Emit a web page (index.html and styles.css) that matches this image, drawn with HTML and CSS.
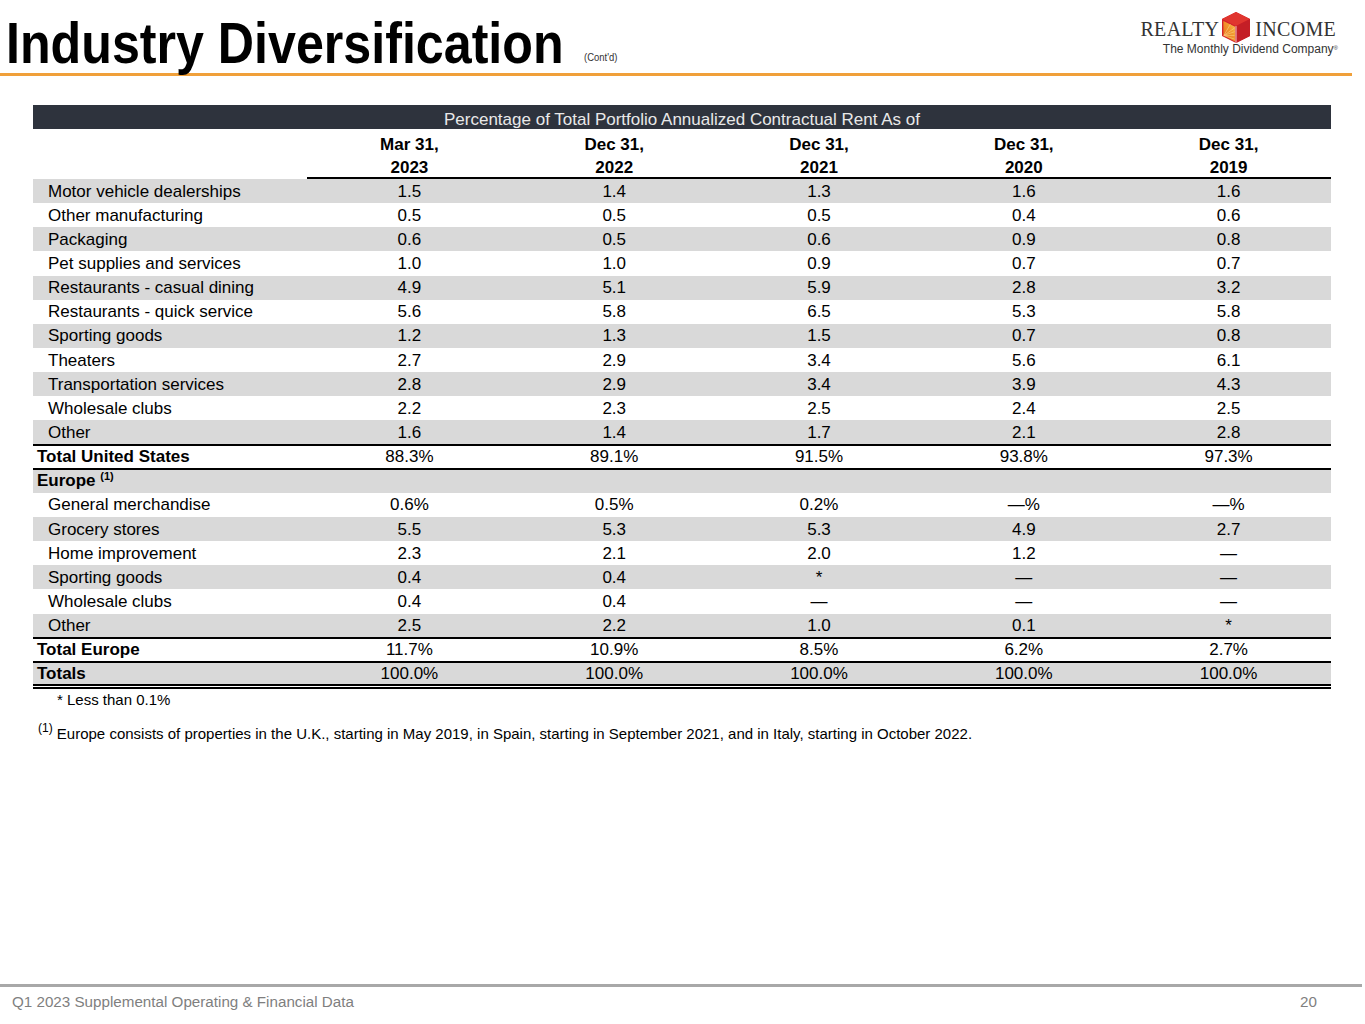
FILE: index.html
```html
<!DOCTYPE html>
<html lang="en">
<head>
<meta charset="utf-8">
<title>Industry Diversification (Cont'd)</title>
<link rel="stylesheet" href="styles.css">
</head>
<body>
<div class="page">
  <header class="top">
    <div class="title-wrap">
      <h1 class="title">Industry Diversification</h1>
      <span class="contd">(Cont'd)</span>
    </div>
    <div class="logo">
      <div class="logo-row">
        <span class="logo-word">REALTY</span>
        <svg class="logo-mark" viewBox="0 0 30 33" width="28" height="31" aria-hidden="true">
          <defs>
            <linearGradient id="face" x1="0" y1="1" x2="1" y2="0">
              <stop offset="0" stop-color="#e8631c"/>
              <stop offset="0.6" stop-color="#f29a2e"/>
              <stop offset="1" stop-color="#f7c35a"/>
            </linearGradient>
          </defs>
          <polygon points="15,0 30,7.5 30,25.5 15,33 0,25.5 0,7.5" fill="#d4232b"/>
          <polygon points="15,0 30,7.5 15,15 0,7.5" fill="#e0352f"/>
          <polygon points="15,15 30,7.5 30,25.5 15,33" fill="#c41e26"/>
          <polygon points="1.5,9.5 14,15.8 14,31.5 1.5,25" fill="url(#face)"/>
          <g stroke="#fbd98a" stroke-width="0.7" opacity="0.85">
            <line x1="2" y1="25" x2="13.5" y2="17"/>
            <line x1="2" y1="25" x2="13.5" y2="21"/>
            <line x1="2" y1="25" x2="13.5" y2="25"/>
            <line x1="2" y1="25" x2="13.5" y2="29"/>
            <line x1="2" y1="25" x2="9" y2="13"/>
          </g>
          <line x1="15" y1="15" x2="15" y2="33" stroke="#ffffff" stroke-width="0.8"/>
        </svg>
        <span class="logo-word">INCOME</span>
      </div>
      <div class="tagline">The Monthly Dividend Company<sup>®</sup></div>
    </div>
  </header>

  <main class="content">
    <div class="tbl">
      <div class="bar">Percentage of Total Portfolio Annualized Contractual Rent As of</div>
      <div class="hrow">
        <div class="hlabel"></div>
        <div class="hcell">Mar 31,<br>2023</div>
        <div class="hcell">Dec 31,<br>2022</div>
        <div class="hcell">Dec 31,<br>2021</div>
        <div class="hcell">Dec 31,<br>2020</div>
        <div class="hcell">Dec 31,<br>2019</div>
      </div>

      <div class="row shade"><div class="lbl sub">Motor vehicle dealerships</div><div>1.5</div><div>1.4</div><div>1.3</div><div>1.6</div><div>1.6</div></div>
      <div class="row"><div class="lbl sub">Other manufacturing</div><div>0.5</div><div>0.5</div><div>0.5</div><div>0.4</div><div>0.6</div></div>
      <div class="row shade"><div class="lbl sub">Packaging</div><div>0.6</div><div>0.5</div><div>0.6</div><div>0.9</div><div>0.8</div></div>
      <div class="row"><div class="lbl sub">Pet supplies and services</div><div>1.0</div><div>1.0</div><div>0.9</div><div>0.7</div><div>0.7</div></div>
      <div class="row shade"><div class="lbl sub">Restaurants - casual dining</div><div>4.9</div><div>5.1</div><div>5.9</div><div>2.8</div><div>3.2</div></div>
      <div class="row"><div class="lbl sub">Restaurants - quick service</div><div>5.6</div><div>5.8</div><div>6.5</div><div>5.3</div><div>5.8</div></div>
      <div class="row shade"><div class="lbl sub">Sporting goods</div><div>1.2</div><div>1.3</div><div>1.5</div><div>0.7</div><div>0.8</div></div>
      <div class="row"><div class="lbl sub">Theaters</div><div>2.7</div><div>2.9</div><div>3.4</div><div>5.6</div><div>6.1</div></div>
      <div class="row shade"><div class="lbl sub">Transportation services</div><div>2.8</div><div>2.9</div><div>3.4</div><div>3.9</div><div>4.3</div></div>
      <div class="row"><div class="lbl sub">Wholesale clubs</div><div>2.2</div><div>2.3</div><div>2.5</div><div>2.4</div><div>2.5</div></div>
      <div class="row shade"><div class="lbl sub">Other</div><div>1.6</div><div>1.4</div><div>1.7</div><div>2.1</div><div>2.8</div></div>
      <div class="row rule"><div class="lbl tot">Total United States</div><div>88.3%</div><div>89.1%</div><div>91.5%</div><div>93.8%</div><div>97.3%</div></div>
      <div class="row shade rule"><div class="lbl tot">Europe <sup class="fn">(1)</sup></div><div></div><div></div><div></div><div></div><div></div></div>
      <div class="row"><div class="lbl sub">General merchandise</div><div>0.6%</div><div>0.5%</div><div>0.2%</div><div>—%</div><div>—%</div></div>
      <div class="row shade"><div class="lbl sub">Grocery stores</div><div>5.5</div><div>5.3</div><div>5.3</div><div>4.9</div><div>2.7</div></div>
      <div class="row"><div class="lbl sub">Home improvement</div><div>2.3</div><div>2.1</div><div>2.0</div><div>1.2</div><div>—</div></div>
      <div class="row shade"><div class="lbl sub">Sporting goods</div><div>0.4</div><div>0.4</div><div>*</div><div>—</div><div>—</div></div>
      <div class="row"><div class="lbl sub">Wholesale clubs</div><div>0.4</div><div>0.4</div><div>—</div><div>—</div><div>—</div></div>
      <div class="row shade"><div class="lbl sub">Other</div><div>2.5</div><div>2.2</div><div>1.0</div><div>0.1</div><div>*</div></div>
      <div class="row rule"><div class="lbl tot">Total Europe</div><div>11.7%</div><div>10.9%</div><div>8.5%</div><div>6.2%</div><div>2.7%</div></div>
      <div class="row shade rule last"><div class="lbl tot">Totals</div><div>100.0%</div><div>100.0%</div><div>100.0%</div><div>100.0%</div><div>100.0%</div></div>
      <div class="dbl"></div>
    </div>

    <p class="note-star">* Less than 0.1%</p>
    <p class="note"><sup class="fn">(1)</sup> Europe consists of properties in the U.K., starting in May 2019, in Spain, starting in September 2021, and in Italy, starting in October 2022.</p>
  </main>

  <footer class="foot">
    <span>Q1 2023 Supplemental Operating &amp; Financial Data</span>
    <span>20</span>
  </footer>
</div>
</body>
</html>
```

FILE: styles.css
```css
* { box-sizing: border-box; }

html, body {
  margin: 0;
  padding: 0;
  background: #ffffff;
}

body {
  font-family: "Liberation Sans", Arial, sans-serif;
  color: #000;
}

.page {
  width: 1365px;
  height: 1024px;
  display: flex;
  flex-direction: column;
}

/* ---------- header ---------- */
.top {
  width: 1352px;
  height: 76px;
  border-bottom: 3px solid #f0a03a;
  display: flex;
  justify-content: space-between;
  align-items: flex-start;
}

.title-wrap {
  display: flex;
  align-items: baseline;
  padding: 13px 0 0 6px;
  width: 700px;
}

.title {
  margin: 0;
  font-family: "Liberation Sans", Arial, sans-serif;
  font-weight: 700;
  font-size: 58px;
  line-height: 60px;
  color: #000;
  white-space: nowrap;
  transform: scaleX(0.865);
  transform-origin: left center;
  width: 560px;
}

.contd {
  margin-left: 18px;
  font-family: "Liberation Sans", Arial, sans-serif;
  font-size: 11px;
  color: #333;
  position: relative;
  top: -2px;
  transform: scaleX(0.86);
  transform-origin: left center;
  display: inline-block;
}

.logo {
  display: flex;
  flex-direction: column;
  align-items: flex-end;
  padding-top: 12px;
  margin-right: 14px;
}

.logo-row {
  display: flex;
  align-items: center;
  margin-right: 2px;
}

.logo-word {
  font-family: "Liberation Serif", "Times New Roman", serif;
  font-size: 20px;
  line-height: 22px;
  letter-spacing: 0.3px;
  color: #333;
  padding-top: 3px;
}

.logo-mark {
  display: block;
  margin: 0 5px 0 3px;
}

.tagline {
  margin-top: 0px;
  font-family: "Liberation Sans", Arial, sans-serif;
  font-size: 12px;
  line-height: 13px;
  color: #333;
}

.tagline sup {
  font-size: 6px;
  vertical-align: top;
  position: relative;
  top: -1px;
}

/* ---------- table ---------- */
.content {
  padding: 29px 0 0 33px;
}

.tbl {
  width: 1298px;
  font-size: 17px;
}

.bar {
  height: 24px;
  background: #2e333d;
  color: #e9e9e9;
  text-align: center;
  padding-top: 5px;
  line-height: 19px;
}

.hrow {
  display: grid;
  grid-template-columns: 274px repeat(5, 1fr);
  padding-top: 4px;
}

.hcell {
  text-align: center;
  font-weight: 700;
  line-height: 23px;
  height: 46px;
  border-bottom: 2px solid #000;
}

.row {
  display: grid;
  grid-template-columns: 274px repeat(5, 1fr);
  align-items: center;
  height: 24.15px;
  line-height: 19px;
  text-align: center;
}

.row.shade {
  background: #d9d9d9;
}

.row.rule {
  box-shadow: 0 -1px 0 #000, inset 0 1px 0 #000;
}

.row.last {
  box-shadow: 0 -1px 0 #000, inset 0 1px 0 #000, inset 0 -2px 0 #000;
}

.dbl {
  margin-top: 1px;
  height: 2px;
  background: #000;
}

.lbl {
  text-align: left;
  white-space: nowrap;
}

.lbl.sub {
  padding-left: 15px;
}

.lbl.tot {
  padding-left: 4px;
  font-weight: 700;
}

.fn {
  font-size: 11px;
  vertical-align: top;
  position: relative;
  top: -4px;
  font-weight: 700;
}

.note-star {
  margin: 2px 0 0 24px;
  font-size: 15px;
  line-height: 17px;
}

.note {
  margin: 17px 0 0 5px;
  font-size: 15px;
  line-height: 17px;
}

.note .fn {
  font-weight: 400;
  font-size: 12px;
  top: -5px;
}

/* ---------- footer ---------- */
.foot {
  margin-top: auto;
  width: 1362px;
  height: 40px;
  border-top: 3px solid #a8a8a8;
  display: flex;
  justify-content: space-between;
  padding: 6px 45px 0 12px;
  font-size: 15.2px;
  line-height: 18px;
  color: #7f7f7f;
}
```
